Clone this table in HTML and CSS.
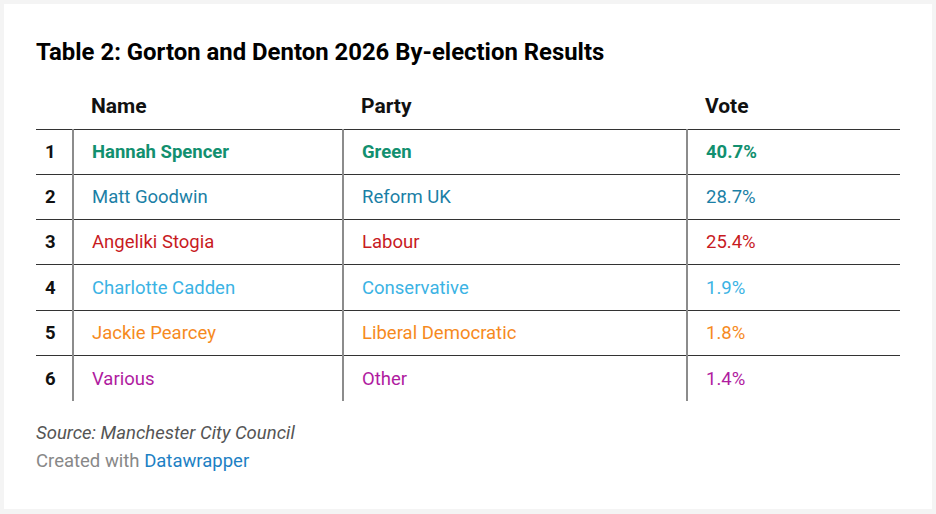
FILE: index.html
```html
<!DOCTYPE html>
<html lang="en">
<head>
<meta charset="utf-8">
<title>Table 2: Gorton and Denton 2026 By-election Results</title>
<link rel="stylesheet" href="styles.css">
</head>
<body>
<div class="card">
  <h1 class="title">Table 2: Gorton and Denton 2026 By-election Results</h1>
  <table class="results">
    <thead>
      <tr>
        <th class="c-rank"></th>
        <th class="c-name">Name</th>
        <th class="c-party">Party</th>
        <th class="c-vote">Vote</th>
      </tr>
    </thead>
    <tbody>
      <tr class="green bold">
        <td class="c-rank">1</td>
        <td class="c-name">Hannah Spencer</td>
        <td class="c-party">Green</td>
        <td class="c-vote">40.7%</td>
      </tr>
      <tr class="reform">
        <td class="c-rank">2</td>
        <td class="c-name">Matt Goodwin</td>
        <td class="c-party">Reform UK</td>
        <td class="c-vote">28.7%</td>
      </tr>
      <tr class="labour">
        <td class="c-rank">3</td>
        <td class="c-name">Angeliki Stogia</td>
        <td class="c-party">Labour</td>
        <td class="c-vote">25.4%</td>
      </tr>
      <tr class="conservative">
        <td class="c-rank">4</td>
        <td class="c-name">Charlotte Cadden</td>
        <td class="c-party">Conservative</td>
        <td class="c-vote">1.9%</td>
      </tr>
      <tr class="libdem">
        <td class="c-rank">5</td>
        <td class="c-name">Jackie Pearcey</td>
        <td class="c-party">Liberal Democratic</td>
        <td class="c-vote">1.8%</td>
      </tr>
      <tr class="other last">
        <td class="c-rank">6</td>
        <td class="c-name">Various</td>
        <td class="c-party">Other</td>
        <td class="c-vote">1.4%</td>
      </tr>
    </tbody>
  </table>
  <div class="footer">
    <p class="source">Source: Manchester City Council</p>
    <p class="credit">Created with <span class="dw">Datawrapper</span></p>
  </div>
</div>
</body>
</html>
```

FILE: styles.css
```css
* { box-sizing: border-box; }

html, body {
  margin: 0;
  padding: 0;
  background: #f4f4f4;
  font-family: Roboto, "Liberation Sans", Arial, sans-serif;
}

body {
  padding: 4px;
}

.card {
  width: 928px;
  height: 505px;
  background: #ffffff;
  padding: 34px 32px 0 32px;
}

.title {
  margin: 0;
  font-size: 23.9px;
  font-weight: 700;
  line-height: 28px;
  color: #000;
}

.results {
  margin-top: 24px;
  width: 864px;
  border-collapse: collapse;
  font-size: 18.5px;
  color: #1a1a1a;
}

.results th {
  text-align: left;
  font-weight: 700;
  font-size: 21px;
  height: 39px;
  vertical-align: top;
  padding: 4px 18px 0;
  border-bottom: 1px solid #333;
  color: #111;
}

.results td {
  height: 45.33px;
  padding: 0 18px;
  vertical-align: middle;
  border-bottom: 1px solid #333;
  border-left: 2px solid #8c8c8c;
}

.results tr.last td { border-bottom: none; }

.results .c-rank {
  width: 37px;
  padding: 0 0 0 9px;
  border-left: none;
}

.results .c-name { width: 270px; }
.results .c-party { width: 344px; }
.results .c-vote { width: 213px; }

.bold td { font-weight: 700; }

.green td { color: #12906f; }
.reform td { color: #1b7fa6; }
.labour td { color: #c81b1f; }
.conservative td { color: #3bb3e4; }
.libdem td { color: #f68a1e; }
.other td { color: #b01c9f; }

.results td.c-rank { color: #111; font-weight: 700; }

.footer {
  margin-top: 18px;
  font-size: 18.5px;
  line-height: 28px;
}

.footer p { margin: 0; }

.source {
  font-style: italic;
  color: #555;
}

.credit {
  color: #888;
}

.dw { color: #1d81c4; }
```
